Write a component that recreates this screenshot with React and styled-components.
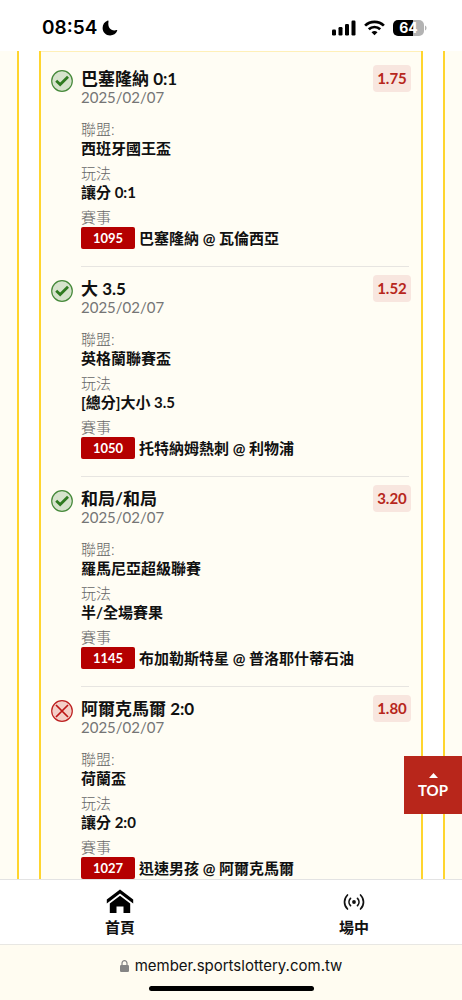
import React from "react";
import styled, { createGlobalStyle } from "styled-components";

const GlobalStyle = createGlobalStyle`
  * {
    box-sizing: border-box;
  }

  body {
    margin: 0;
    background: #fffdf4;
    color: #111;
    font-family: Lato, "Noto Sans CJK TC", sans-serif;
  }

  button {
    border: 0;
    padding: 0;
    font-family: inherit;
    color: inherit;
    cursor: pointer;
  }
`;

const Screen = styled.div`
  position: relative;
  display: flex;
  flex-direction: column;
  height: 100vh;
  overflow: hidden;
`;

const StatusBar = styled.header`
  display: flex;
  flex: none;
  align-items: center;
  justify-content: space-between;
  height: 51px;
  padding: 4px 35px 0 42px;
  background: #fff;
  color: #000;
  font-family: Inter, sans-serif;
`;

const Clock = styled.div`
  display: flex;
  align-items: center;
  gap: 5px;
  font-size: 19px;
  font-weight: 600;
`;

const Signals = styled.div`
  display: flex;
  align-items: center;
  gap: 8px;
`;

const Scroller = styled.main`
  flex: 1;
  min-height: 0;
  padding: 0 17px;
  overflow-y: auto;
  scrollbar-width: none;
`;

const Ticket = styled.section`
  padding: 0 20px;
  border: solid #ffd52e;
  border-width: 0 2px;
  background: #fff;
`;

const BetList = styled.ul`
  margin: 0;
  padding: 6px 0 24px;
  list-style: none;
  border: solid #ffd52e;
  border-width: 0 2px;
  background: #fffdf4;
  box-shadow: inset 0 1px #fff0b8;
`;

const Bet = styled.li`
  display: grid;
  grid-template-columns: 22px 1fr auto;
  column-gap: 8px;
  align-items: start;
  padding: 8px 10px 0;
`;

const ResultIcon = styled.svg`
  width: 22px;
  height: 22px;
  margin-top: 5px;
`;

const Title = styled.h2`
  margin: 0;
  font-size: 17px;
  font-weight: 700;
  line-height: 28px;
`;

const BetDate = styled.time`
  display: block;
  color: #757575;
  font-size: 15px;
  line-height: 8px;
`;

const Odds = styled.div`
  width: 38px;
  border-radius: 4px;
  background: #f8e6df;
  color: #b7261c;
  font-size: 15px;
  font-weight: 700;
  line-height: 27px;
  text-align: center;
`;

const Details = styled.dl`
  display: grid;
  grid-column: 2 / 4;
  gap: 6px;
  margin: 19px 0 17px;
  font-size: 15px;
  line-height: 19px;
`;

const Label = styled.dt`
  color: #666;
  font-weight: 300;
`;

const Value = styled.dd`
  display: flex;
  align-items: center;
  gap: 4px;
  margin: 0;
  font-weight: 700;
`;

const GameNumber = styled.span`
  width: 54px;
  border-radius: 2px;
  background: #b50000;
  color: #fff;
  font-size: 13px;
  line-height: 22px;
  text-align: center;
`;

const Divider = styled.hr`
  height: 1px;
  margin: 0 2px 0 0;
  border: 0;
  grid-column: 2 / 4;
  background: #e7e5e1;
`;

const TopButton = styled.button`
  position: absolute;
  right: 0;
  bottom: 186px;
  display: flex;
  flex-direction: column;
  align-items: center;
  justify-content: center;
  gap: 2px;
  width: 58px;
  height: 58px;
  padding-top: 3px;
  background: #b8261b;
  color: #fff;
  font-size: 15px;
  font-weight: 700;
  line-height: 20px;
`;

const TabBar = styled.nav`
  display: flex;
  flex: none;
  height: 65px;
  padding-left: 3px;
  border-top: 1px solid #e3e3e3;
  background: #fff;
`;

const Tab = styled.a`
  display: flex;
  flex: none;
  flex-direction: column;
  align-items: center;
  width: 51%;
  padding-top: 8px;
  color: #111;
  font-size: 15px;
  font-weight: 700;
  line-height: 22px;
  text-decoration: none;

  svg {
    height: 28px;
  }
`;

const AddressBar = styled.footer`
  display: flex;
  flex: none;
  flex-direction: column;
  align-items: center;
  justify-content: space-between;
  height: 56px;
  padding: 10px 0 9px;
  border-top: 1px solid #e8e7e3;
  background: #fffcf1;
`;

const Address = styled.div`
  display: flex;
  align-items: center;
  gap: 6px;
  font-family: Inter, sans-serif;
  font-size: 15px;
  line-height: 22px;
`;

const HomeIndicator = styled.div`
  width: 165px;
  height: 5px;
  border-radius: 3px;
  background: #000;
`;

const bets = [
  {
    won: true,
    title: "巴塞隆納 0:1",
    odds: "1.75",
    league: "西班牙國王盃",
    play: "讓分 0:1",
    number: "1095",
    match: "巴塞隆納 @ 瓦倫西亞"
  },
  {
    won: true,
    title: "大 3.5",
    odds: "1.52",
    league: "英格蘭聯賽盃",
    play: "[總分]大小 3.5",
    number: "1050",
    match: "托特納姆熱刺 @ 利物浦"
  },
  {
    won: true,
    title: "和局/和局",
    odds: "3.20",
    league: "羅馬尼亞超級聯賽",
    play: "半/全場賽果",
    number: "1145",
    match: "布加勒斯特星 @ 普洛耶什蒂石油"
  },
  {
    won: false,
    title: "阿爾克馬爾 2:0",
    odds: "1.80",
    league: "荷蘭盃",
    play: "讓分 2:0",
    number: "1027",
    match: "迅速男孩 @ 阿爾克馬爾"
  }
];

const Result = ({ won }) => (
  <ResultIcon viewBox="0 0 22 22" fill="none" role="img" aria-label={won ? "中獎" : "未中獎"}>
    <circle
      cx="11"
      cy="11"
      r="10.3"
      fill={won ? "#d6e3cc" : "#f4cfc8"}
      stroke={won ? "#46893a" : "#bd2020"}
      strokeWidth="1.2"
    />
    {won ? (
      <path d="M5.2 10.7 9.2 14.5 17 6.8" stroke="#2f7a20" strokeWidth="2.8" />
    ) : (
      <path d="m5 5 12 12M17 5 5 17" stroke="#bd1515" strokeWidth="1.7" />
    )}
  </ResultIcon>
);

const BetRow = ({ bet, last }) => (
  <Bet>
    <Result won={bet.won} />
    <div>
      <Title>{bet.title}</Title>
      <BetDate dateTime="2025-02-07">2025/02/07</BetDate>
    </div>
    <Odds>{bet.odds}</Odds>
    <Details>
      <div>
        <Label>聯盟:</Label>
        <Value>{bet.league}</Value>
      </div>
      <div>
        <Label>玩法</Label>
        <Value>{bet.play}</Value>
      </div>
      <div>
        <Label>賽事</Label>
        <Value>
          <GameNumber>{bet.number}</GameNumber>
          {bet.match}
        </Value>
      </div>
    </Details>
    {!last && <Divider />}
  </Bet>
);

const App = () => {
  const scroller = React.useRef(null);
  const goToTop = () => scroller.current.scrollTo({ top: 0 });

  return (
    <Screen>
      <GlobalStyle />
      <StatusBar>
        <Clock>
          08:54
          <svg width="16" height="16" viewBox="0 0 16 16" aria-hidden="true">
            <path d="M5.8.6C2.6 1.7.6 4.5.6 7.9c0 4.2 3.3 7.5 7.5 7.5 3.2 0 6-1.8 7.1-4.700.2-.5-.1-.8-.6-.6-5.4 1.400-9.200-2.400-8.100-8.700.1-.6-.1-1-.7-.8Z" />
          </svg>
        </Clock>
        <Signals>
          <svg width="24" height="16" viewBox="0 0 24 16" aria-hidden="true">
            <rect x="0" y="9.5" width="4" height="6" rx="1.2" />
            <rect x="6.5" y="7" width="4" height="8.5" rx="1.2" />
            <rect x="13" y="4" width="4" height="11.5" rx="1.2" />
            <rect x="19.5" y="0.5" width="4" height="15" rx="1.2" />
          </svg>
          <svg width="21" height="16" viewBox="0 0 21 16" fill="none" stroke="#000" strokeWidth="2.7" aria-hidden="true">
            <path d="M1.1 5.6a13.5 13.5 0 0 1 18.8 0" />
            <path d="M4.8 9.3a8.2 8.2 0 0 1 11.4 0" />
            <path d="M10.5 15.3 7.5 12.3a4.4 4.4 0 0 1 6 0Z" fill="#000" stroke="none" />
          </svg>
          <svg width="34" height="16" viewBox="0 0 34 16" role="img" aria-label="64%">
            <path d="M5 0h15v16H5a5 5 0 0 1-5-5V5a5 5 0 0 1 5-5Z" />
            <path d="M20 0h6a5 5 0 0 1 5 5v6a5 5 0 0 1-5 5h-6Z" fill="#b3b3b3" />
            <path d="M32 5.5c2 .8 2 4.2 0 5Z" fill="#b3b3b3" />
            <text x="15.5" y="13" fill="#fff" fontSize="14" fontWeight="700" textAnchor="middle">
              64
            </text>
          </svg>
        </Signals>
      </StatusBar>

      <Scroller ref={scroller}>
        <Ticket>
          <BetList>
            {bets.map((bet, i) => (
              <BetRow key={bet.number} bet={bet} last={i === bets.length - 1} />
            ))}
          </BetList>
        </Ticket>
      </Scroller>

      <TopButton type="button" onClick={goToTop}>
        <svg width="9" height="5" viewBox="0 0 9 5" fill="#fff" aria-hidden="true">
          <path d="M4.5 0 9 5H0Z" />
        </svg>
        TOP
      </TopButton>

      <TabBar>
        <Tab href="#home">
          <svg width="28" viewBox="0 0 28 28" fill="#000" aria-hidden="true">
            <path d="M14 1.5 27.2 11.5v4L14 5.5.8 15.5v-4Z" />
            <path d="m14 7.8 10.2 7.6V25h-6.7v-6.5h-7V25H3.8v-9.6Z" />
          </svg>
          首頁
        </Tab>
        <Tab href="#live">
          <svg width="22" viewBox="0 0 22 28" fill="none" stroke="#111" strokeWidth="1.7" strokeLinecap="round" aria-hidden="true">
            <circle cx="11" cy="14" r="1.9" fill="#111" stroke="none" />
            <path d="M7.5 10.3a5.4 5.4 0 0 0 0 7.4M14.5 10.3a5.4 5.4 0 0 1 0 7.4" />
            <path d="M4.5 7a9.7 9.7 0 0 0 0 14M17.5 7a9.7 9.7 0 0 1 0 14" />
          </svg>
          場中
        </Tab>
      </TabBar>

      <AddressBar>
        <Address>
          <svg width="9" height="12" viewBox="0 0 9 12" fill="#858585" aria-hidden="true">
            <rect y="5" width="9" height="7" rx="1.2" />
            <path d="M2 5.5V3.2a2.5 2.5 0 0 1 5 0v2.3" fill="none" stroke="#858585" strokeWidth="1.2" />
          </svg>
          member.sportslottery.com.tw
        </Address>
        <HomeIndicator />
      </AddressBar>
    </Screen>
  );
};

export default App;
